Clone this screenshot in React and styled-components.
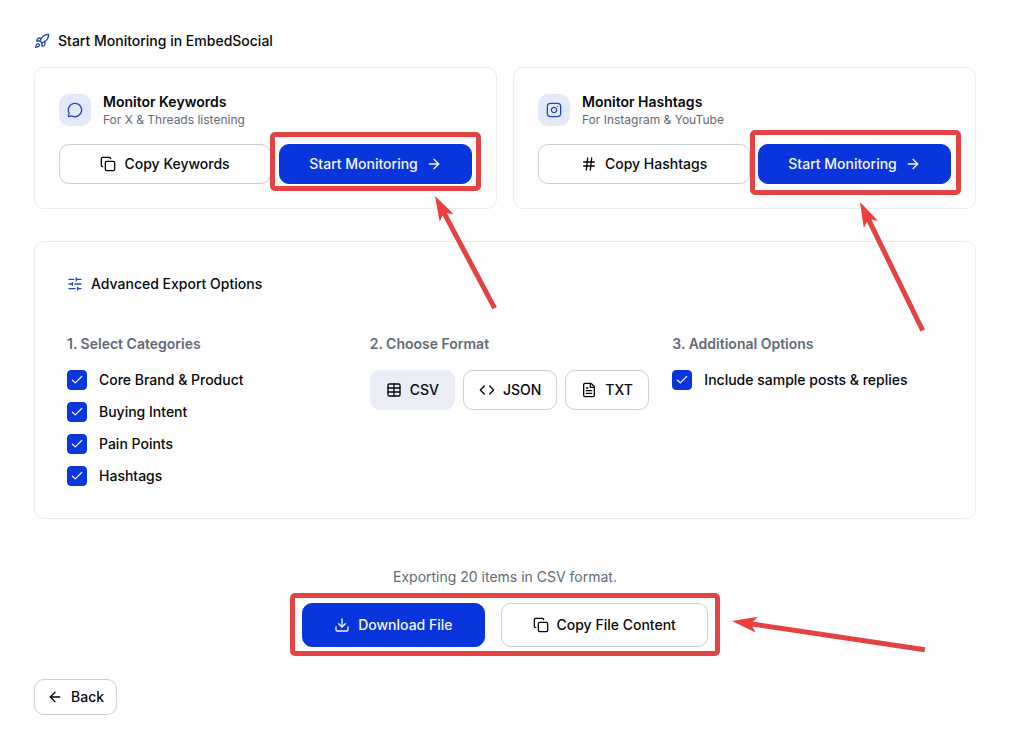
import { useId, useState } from 'react';
import styled, { createGlobalStyle } from 'styled-components';
import {
  ArrowLeft,
  ArrowRight,
  Check,
  Code,
  Copy,
  Download,
  FileText,
  Hash,
  Instagram,
  MessageCircle,
  Rocket,
  SlidersHorizontal,
  Table,
} from 'lucide-react';

const CATEGORIES = [
  'Core Brand & Product',
  'Buying Intent',
  'Pain Points',
  'Hashtags',
];

const FORMATS = [
  { name: 'CSV', Icon: Table },
  { name: 'JSON', Icon: Code },
  { name: 'TXT', Icon: FileText },
];

function CheckOption({ label }) {
  const id = useId();
  const [checked, setChecked] = useState(true);

  return (
    <OptionRow>
      <CheckWrap>
        <CheckInput
          id={id}
          type="checkbox"
          checked={checked}
          onChange={(event) => setChecked(event.target.checked)}
        />
        {checked && <Check size={14} />}
      </CheckWrap>
      <label htmlFor={id}>{label}</label>
    </OptionRow>
  );
}

// arrow whose tip points at the framed buttons
function Arrow({ length, angle, left, top }) {
  return (
    <ArrowSvg $left={left} $top={top} width="1" height="1" aria-hidden="true">
      <g transform={`rotate(${angle})`}>
        <path d={`M18 -2.5 H${length} V2.5 H18 Z`} fill="#e34343" />
        <path d="M0 0 L25 -8 L19 0 L25 8 Z" fill="#ef3e3e" />
      </g>
    </ArrowSvg>
  );
}

function MonitorCard({ Icon, title, text, CopyIcon, copyLabel, frame, arrow }) {
  return (
    <Card>
      <CardHeader>
        <IconTile>
          <Icon size={16} />
        </IconTile>
        <div>
          <CardTitle>{title}</CardTitle>
          <CardText>{text}</CardText>
        </div>
      </CardHeader>
      <CardActions>
        <Button>
          <CopyIcon size={16} />
          {copyLabel}
        </Button>
        <Highlight $frame={frame}>
          <Button $primary>
            Start Monitoring
            <ArrowRight size={16} />
          </Button>
          <Arrow {...arrow} />
        </Highlight>
      </CardActions>
    </Card>
  );
}

export default function App() {
  const [format, setFormat] = useState('CSV');

  return (
    <>
      <GlobalStyle />
      <Page>
        <SectionTitle>
          <Rocket size={16} />
          Start Monitoring in EmbedSocial
        </SectionTitle>

        <CardGrid>
          <MonitorCard
            Icon={MessageCircle}
            title="Monitor Keywords"
            text="For X & Threads listening"
            CopyIcon={Copy}
            copyLabel="Copy Keywords"
            frame="-12px -9px -7px"
            arrow={{ length: 127, angle: 62, left: '156px', top: '52px' }}
          />
          <MonitorCard
            Icon={Instagram}
            title="Monitor Hashtags"
            text="For Instagram & YouTube"
            CopyIcon={Hash}
            copyLabel="Copy Hashtags"
            frame="-14px -10px -11px -8px"
            arrow={{ length: 143, angle: 64, left: '102px', top: '58px' }}
          />
        </CardGrid>

        <Panel>
          <SectionTitle>
            <SlidersHorizontal size={16} />
            Advanced Export Options
          </SectionTitle>
          <Columns>
            <Column>
              <ColumnTitle>1. Select Categories</ColumnTitle>
              <OptionList>
                {CATEGORIES.map((name) => (
                  <CheckOption key={name} label={name} />
                ))}
              </OptionList>
            </Column>
            <Column>
              <ColumnTitle>2. Choose Format</ColumnTitle>
              <FormatRow>
                {FORMATS.map(({ name, Icon }) => (
                  <Button
                    key={name}
                    $selected={name === format}
                    $pad="15px"
                    aria-pressed={name === format}
                    onClick={() => setFormat(name)}
                  >
                    <Icon size={16} />
                    {name}
                  </Button>
                ))}
              </FormatRow>
            </Column>
            <Column>
              <ColumnTitle>3. Additional Options</ColumnTitle>
              <OptionList>
                <CheckOption label="Include sample posts & replies" />
              </OptionList>
            </Column>
          </Columns>
        </Panel>

        <ExportArea>
          <ExportText>Exporting 20 items in {format} format.</ExportText>
          <Highlight $frame="-10px -12px -9px">
            <Button $primary $height="44px" $pad="31px">
              <Download size={16} />
              Download File
            </Button>
            <Button $height="44px" $pad="31px">
              <Copy size={16} />
              Copy File Content
            </Button>
            <Arrow length={195} angle={8.5} left="calc(100% + 24px)" top="18px" />
          </Highlight>
        </ExportArea>

        <Button $height="36px" $pad="12px">
          <ArrowLeft size={16} />
          Back
        </Button>
      </Page>
    </>
  );
}

//------------Styled Comp------------
const GlobalStyle = createGlobalStyle`
  * {
    box-sizing: border-box;
  }
  body {
    margin: 0;
    background: #fefefe;
    color: #08090c;
    font-family: Inter, 'Liberation Sans', sans-serif;
    font-size: 14px;
    font-weight: 500;
    line-height: 20px;
  }
  h2, h3, h4, p {
    margin: 0;
    font: inherit;
  }
  svg {
    flex-shrink: 0;
  }
`;

const Page = styled.main`
  display: flex;
  flex-direction: column;
  align-items: flex-start;
  padding: 31px 39px 32px 34px;
`;

const SectionTitle = styled.h2`
  display: flex;
  align-items: center;
  gap: 8px;

  svg {
    color: #2247b8;
  }
`;

const CardGrid = styled.section`
  display: grid;
  grid-template-columns: 1fr 1fr;
  gap: 16px;
  width: 100%;
  margin: 16px 0 32px;
`;

const Card = styled.article`
  padding: 24px;
  border: 1px solid #e9ecef;
  border-radius: 10px;
`;

const CardHeader = styled.header`
  display: flex;
  align-items: center;
  gap: 12px;
  margin-bottom: 16px;
`;

const IconTile = styled.span`
  display: grid;
  place-items: center;
  width: 32px;
  height: 32px;
  border-radius: 10px;
  background: #e3e9fb;
  color: #2247b8;
`;

const CardTitle = styled.h3`
  && {
    font-weight: 600;
  }
`;

const CardText = styled.p`
  && {
    color: #646b76;
    font-size: 12px;
    font-weight: 400;
    line-height: 16px;
  }
`;

const CardActions = styled.div`
  display: grid;
  grid-template-columns: 11fr 10fr;
  gap: 8px;
`;

const Button = styled.button`
  display: flex;
  align-items: center;
  justify-content: center;
  gap: 8px;
  height: ${({ $height }) => $height || '40px'};
  padding: 0 ${({ $pad }) => $pad || '16px'};
  border: 1px solid #c9d0d6;
  border-radius: 10px;
  background: #fff;
  color: inherit;
  font: inherit;
  white-space: nowrap;
  cursor: pointer;

  ${({ $selected }) =>
    $selected && 'background: #eaedf5; border-color: #eaedf5;'}
  ${({ $primary }) =>
    $primary &&
    'background: #0935dc; border-color: #0935dc; color: #f3f6ff; flex-grow: 1;'}
`;

// red frame drawn around the buttons it holds
const Highlight = styled.div`
  position: relative;
  display: flex;
  gap: 16px;

  &::after {
    content: '';
    position: absolute;
    inset: ${({ $frame }) => $frame};
    border: 5px solid #e34343;
    border-radius: 5px;
    pointer-events: none;
  }
`;

const ArrowSvg = styled.svg`
  position: absolute;
  z-index: 1;
  left: ${({ $left }) => $left};
  top: ${({ $top }) => $top};
  overflow: visible;
  pointer-events: none;
`;

const Panel = styled.section`
  width: 100%;
  padding: 32px;
  border: 1px solid #e9ecef;
  border-radius: 10px;
`;

const Columns = styled.div`
  display: grid;
  grid-template-columns: repeat(3, minmax(0, 1fr));
  gap: 32px;
  margin-top: 40px;
`;

const Column = styled.div`
  display: flex;
  flex-direction: column;
  gap: 16px;
`;

const ColumnTitle = styled.h3`
  && {
    color: #646b76;
    font-weight: 600;
  }
`;

const OptionList = styled.div`
  display: grid;
  gap: 12px;
`;

const OptionRow = styled.div`
  display: flex;
  align-items: center;
  gap: 12px;
`;

const CheckWrap = styled.span`
  display: grid;
  place-items: center;
  width: 20px;
  height: 20px;
  color: #f3f6ff;

  > * {
    grid-area: 1 / 1;
  }
  svg {
    z-index: 1;
    pointer-events: none;
  }
`;

const CheckInput = styled.input`
  appearance: none;
  width: 20px;
  height: 20px;
  margin: 0;
  border: 1px solid #0935dc;
  border-radius: 4px;

  &:checked {
    background: #0935dc;
  }
`;

const FormatRow = styled.div`
  display: flex;
  gap: 8px;
`;

const ExportArea = styled.section`
  display: flex;
  flex-direction: column;
  align-items: center;
  gap: 16px;
  width: 100%;
  margin: 48px 0 32px;
`;

const ExportText = styled.p`
  && {
    color: #646b76;
    font-weight: 400;
  }
`;
